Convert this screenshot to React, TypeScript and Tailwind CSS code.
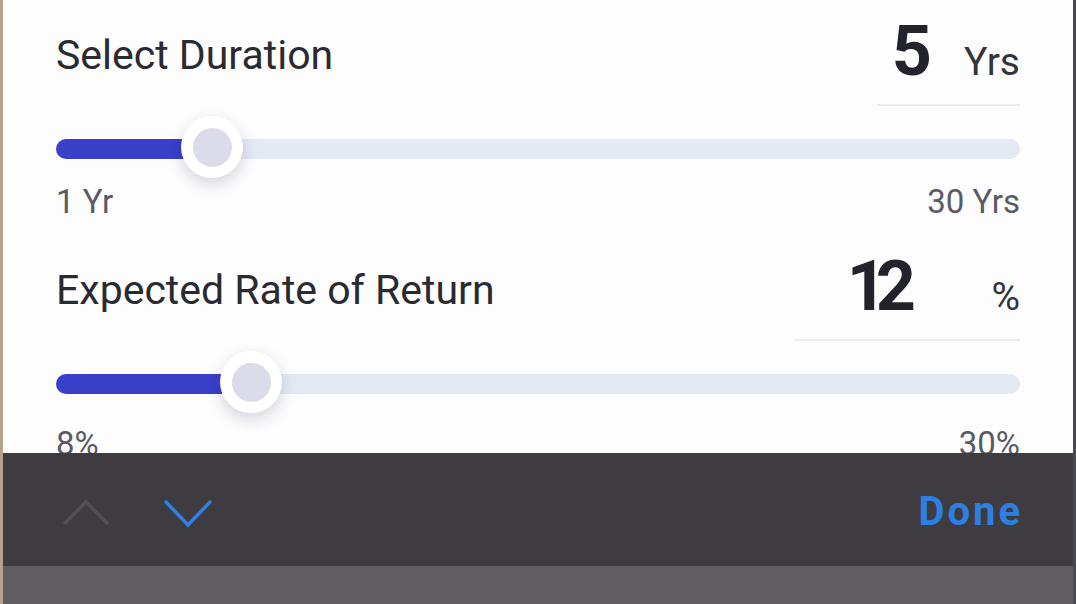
import React from "react"

/**
 * Duration / rate-of-return sliders with an iOS keyboard accessory bar
 * sitting over the bottom of the form.
 */

const FONT = "font-['Roboto','Inter',sans-serif]"

type Field = {
  label: string
  value: React.ReactNode
  unit: string
  valueW: string
  numW: string
  thumb: number
  min: string
  max: string
  labelsMt: string
}

const FIELDS: Field[] = [
  { label: "Select Duration", value: "5", unit: "Yrs", valueW: "w-[143px]", numW: "w-[55px]", thumb: 156, min: "1 Yr", max: "30 Yrs", labelsMt: "mt-[26px]" },
  {
    label: "Expected Rate of Return",
    value: (
      <>
        <span className="tracking-[-11px]">1</span>2
      </>
    ),
    unit: "%",
    valueW: "w-[225px]",
    numW: "w-[121px]",
    thumb: 195,
    min: "8%",
    max: "30%",
    labelsMt: "mt-[33px]",
  },
]

function Slider({ thumb }: { thumb: number }) {
  return (
    <div className="relative h-[20px] w-full rounded-full bg-[#e4e9f4]">
      <div className="absolute left-0 top-0 h-full rounded-full bg-[#3940c9]" style={{ width: thumb }} />
      <div
        className="absolute top-[-23px] flex h-[62px] w-[62px] items-center justify-center rounded-full bg-white shadow-[0_6px_16px_rgba(30,30,60,0.18)]"
        style={{ left: thumb - 31 }}
      >
        <div className="h-[39px] w-[39px] rounded-full bg-[#dcdbe9]" />
      </div>
    </div>
  )
}

function Section({ f }: { f: Field }) {
  return (
    <div className="flex flex-col">
      <div className="flex items-end justify-between">
        <span className="mb-[28px] text-[41px] leading-[46px] text-[#2a2a30]">{f.label}</span>
        <div className={`flex items-baseline border-b-2 border-[#ececf0] pb-[18px] ${f.valueW}`}>
          <span className={`text-right text-[70px] font-bold leading-[70px] text-[#23232c] ${f.numW}`}>{f.value}</span>
          <span className="ml-auto text-[39px] leading-[46px] text-[#33333a]">{f.unit}</span>
        </div>
      </div>
      <div className="mt-[33px]">
        <Slider thumb={f.thumb} />
      </div>
      <div className={`flex justify-between text-[33px] leading-[33px] text-[#5a5a62] ${f.labelsMt}`}>
        <span>{f.min}</span>
        <span>{f.max}</span>
      </div>
    </div>
  )
}

export default function App() {
  return (
    <div className={`flex h-[604px] w-[1076px] overflow-hidden ${FONT}`}>
      <div className="w-[3px] bg-[#b3a38e]" />
      <div className="flex flex-1 flex-col">
        <div className="h-[453px] overflow-hidden bg-[#fdfdfe] px-[53px] pt-[16px]">
          <div className="flex flex-col gap-[33px]">
            {FIELDS.map((f) => (
              <Section key={f.label} f={f} />
            ))}
          </div>
        </div>
        <div className="flex h-[113px] items-center bg-[#3e3c41] pl-[59px] pr-[53px]">
          <svg width="48" height="28" viewBox="0 0 48 28" className="mt-[4px]">
            <polyline points="2,26 24,4 46,26" fill="none" stroke="#525056" strokeWidth="3.5" strokeLinejoin="miter" />
          </svg>
          <svg width="50" height="30" viewBox="0 0 50 30" className="ml-[53px] mt-[6px]">
            <polyline points="2,3 25,27 48,3" fill="none" stroke="#2f80e4" strokeWidth="3.5" strokeLinejoin="miter" />
          </svg>
          <span className="ml-auto mr-[-3px] mt-[4px] text-[40px] font-bold tracking-[3px] text-[#2d80e2]">Done</span>
        </div>
        <div className="flex-1 bg-[#605e63]" />
      </div>
      <div className="w-[3px] bg-[#4a4a50]" />
    </div>
  )
}
